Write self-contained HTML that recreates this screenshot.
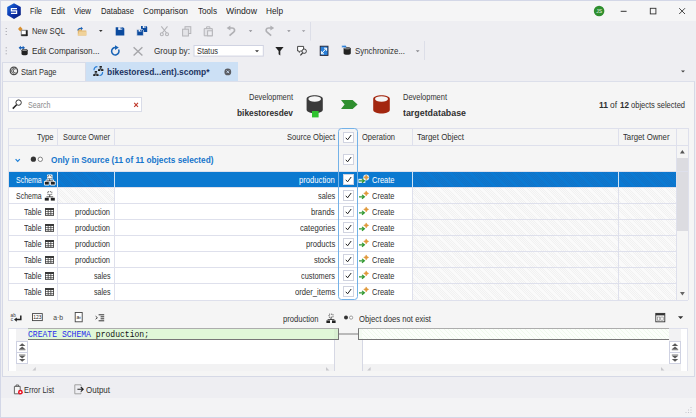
<!DOCTYPE html>
<html><head><meta charset="utf-8"><title>dbForge Schema Compare</title>
<style>
html,body{margin:0;padding:0}
body{width:696px;height:418px;overflow:hidden;position:relative;background:#eeeef2;font-family:"Liberation Sans",sans-serif;color:#303030}
.a{position:absolute}
.t{position:absolute;white-space:nowrap;line-height:12px;font-size:8.6px;height:12px}
svg{position:absolute;overflow:visible}
.hl{position:absolute;height:1px;background:#dee0ec}
.vl{position:absolute;width:1px;background:#dee0ec}
.cb{position:absolute;width:9px;height:9px;background:#fff;border:1px solid #d0d3e0;box-sizing:content-box}
.cb svg{left:1px;top:1px}
.hatch{position:absolute;background:repeating-linear-gradient(45deg,#fafafa 0,#fafafa 1.0px,#f1f1f1 1.0px,#f1f1f1 1.56px)}
.hatchs{position:absolute;background:repeating-linear-gradient(45deg,#0a79d2 0,#0a79d2 1.0px,#1272c6 1.0px,#1272c6 1.56px)}
.mono{font-family:"Liberation Mono",monospace}
</style></head><body>
<!-- window frame -->
<div class="a" style="left:0;top:0;width:696px;height:416px;border:1px solid #d3d7e7;border-right:none"></div>
<div class="a" style="left:1px;top:1px;width:695px;height:20px;background:#f5f5f6"></div>
<!-- tab strip -->
<div class="a" style="left:2px;top:62px;width:84px;height:19px;background:#f3f3f5;border:1px solid #d9dce8;border-bottom:none;box-sizing:border-box"></div>
<div class="a" style="left:86px;top:62px;width:152.3px;height:19.4px;background:#cce0f5"></div>
<!-- document -->
<div class="a" style="left:2px;top:81px;width:693px;height:296px;background:#f5f5f5;border:1px solid #d6d9e6;border-top-color:#dcdfea;box-sizing:border-box"></div>
<!-- bottom status -->
<div class="a" style="left:1px;top:397.5px;width:695px;height:19px;background:#f3f3f5"></div>

<svg style="left:0;top:0" width="696" height="418" viewBox="0 0 696 418">
<defs>
<linearGradient id="lg" x1="0" y1="0" x2="1" y2="1"><stop offset="0" stop-color="#1a6fe0"/><stop offset="0.55" stop-color="#0b2fa8"/><stop offset="1" stop-color="#061a70"/></linearGradient>
</defs>
<!-- app logo -->
<path d="M14 3.2L20.8 7.1V15L14 18.9L7.2 15V7.1Z" fill="url(#lg)"/>
<path d="M17 8.6H11.4V10.9H16.6V13.4H11" fill="none" stroke="#fff" stroke-width="1.2"/>
<!-- title buttons -->
<circle cx="599.1" cy="11" r="5.3" fill="#2f8f2f"/>
<text x="599.1" y="12.8" font-size="5" fill="#e8f5e8" text-anchor="middle" font-family="Liberation Sans, sans-serif">JS</text>
<path d="M620.7 11.3H626.6" stroke="#333" stroke-width="1"/>
<rect x="650.3" y="8.3" width="5.6" height="5.6" fill="none" stroke="#333" stroke-width="0.9"/>
<path d="M679.2 8.2L685 14M685 8.2L679.2 14" stroke="#333" stroke-width="0.9"/>
<!-- grips -->
<g fill="#9a9aa2">
<rect x="5.7" y="28" width="1" height="1"/><rect x="5.7" y="31" width="1" height="1"/><rect x="5.7" y="34" width="1" height="1"/>
<rect x="5.7" y="47.3" width="1" height="1"/><rect x="5.7" y="50.3" width="1" height="1"/><rect x="5.7" y="53.3" width="1" height="1"/>
</g>
<!-- New SQL -->
<path d="M20.3 26.5L22.6 29L20.3 31.5L18 29Z" fill="#d9902f"/>
<path d="M21.3 30.3H27.3V35.8H21.3Z" fill="#fff" stroke="#555" stroke-width="0.7"/>
<path d="M21.3 34.3H27.3V35.9H21.3Z" fill="#222"/><path d="M25.8 30.3H27.5V35.9H25.8Z" fill="#222"/>
<!-- Open folder -->
<path d="M77.8 29.3H81.2L82.2 30.5H86.3V35.4H77.8Z" fill="#e2b66f"/>
<path d="M79.2 31.6H86.3V35.4H77.8Z" fill="#f0d29a"/>
<path d="M77.3 30.6C77.6 28.3 79.6 27.6 81 27.9V26.8L83 28.5L81 30.2V29.1C79.8 28.9 78.6 29.4 78.4 30.6Z" fill="#1b62b8"/>
<path d="M99 30L102.6 30L100.8 32Z" fill="#333"/>
<!-- Save -->
<path d="M115.7 27.2H123L124.3 28.5V35.4H115.7Z" fill="#0b4a9e"/>
<rect x="118.2" y="27.2" width="4" height="2.7" fill="#eef2fa"/><rect x="120.6" y="27.5" width="1.1" height="2" fill="#0b4a9e"/>
<!-- Save all -->
<path d="M141 26H146.3L147.2 26.9V32H141Z" fill="#0b4a9e"/><rect x="142.8" y="26" width="2.8" height="2" fill="#eef2fa"/><rect x="144.4" y="26.2" width="0.9" height="1.5" fill="#0b4a9e"/>
<path d="M136.8 29.4H142.4L143.4 30.4V35.8H136.8Z" fill="#0b4a9e" stroke="#eeeef2" stroke-width="0.7"/><rect x="138.6" y="29.6" width="2.9" height="2" fill="#eef2fa"/><rect x="140.2" y="29.8" width="0.9" height="1.5" fill="#0b4a9e"/>
<!-- Cut -->
<g fill="none" stroke="#b4b4b8" stroke-width="1.1"><path d="M161.3 26.4L166.6 33M167.5 26.4L162.2 33"/><circle cx="161.8" cy="34.3" r="1.5"/><circle cx="167" cy="34.3" r="1.5"/></g>
<!-- Copy -->
<g fill="#e4e4e8" stroke="#b4b4b8" stroke-width="1"><rect x="185" y="26.7" width="5.8" height="6.8"/><rect x="182.6" y="29.2" width="5.8" height="6.8"/></g>
<!-- Paste -->
<g fill="#e4e4e8" stroke="#b4b4b8" stroke-width="1"><path d="M204.2 28.6H212.3V35.8H204.2Z"/><path d="M206.6 28.4V26.8H209.9V28.4" fill="none"/><rect x="207.6" y="30.8" width="4.7" height="5" fill="#eeeef2"/></g>
<!-- Undo / Redo -->
<g fill="none" stroke="#b0b0b4" stroke-width="1.7"><path d="M229.5 35.6L233.6 32.2C235.4 30.6 234.6 28 232.2 28H228.8"/><path d="M271.2 35.6L267.1 32.2C265.3 30.6 266.1 28 268.5 28H271.9"/></g>
<path d="M226.6 28L230.4 25.4V30.6Z" fill="#b0b0b4"/>
<path d="M274.2 28L270.4 25.4V30.6Z" fill="#b0b0b4"/>
<path d="M248.8 30.2H252.4L250.6 32.1Z" fill="#8a8a90"/>
<path d="M287.1 30.2H290.7L288.9 32.1Z" fill="#8a8a90"/>
<path d="M301.8 30.2H305.4L303.6 32.1Z" fill="#9a9aa0"/>
<path d="M310.5 22V40.6" stroke="#dcdee8" stroke-width="1"/>
<!-- Edit comparison -->
<path d="M18.6 47.8L20.9 45.7V47.1H22.7V45.7L25 47.8L22.7 49.9V48.5H20.9V49.9Z" fill="#1b62b8"/>
<path d="M21.5 50.2C21.5 48.6 27.7 48.6 27.7 50.2V53.9C27.7 55.6 21.5 55.6 21.5 53.9Z" fill="#222"/><ellipse cx="24.6" cy="50.2" rx="2.5" ry="0.9" fill="#8a8a8a"/>
<!-- Refresh -->
<path d="M118.6 49.5A3.7 3.7 0 1 1 115.6 47.5" fill="none" stroke="#1762b5" stroke-width="1.5"/><path d="M115 45.3L118.8 47.6L115 49.9Z" fill="#1762b5"/>
<!-- Cancel X -->
<path d="M133.6 47.2L142.4 55.4M142.4 47.2L133.6 55.4" stroke="#a6a6aa" stroke-width="1.4"/>
<!-- Combo -->
<rect x="194" y="45.5" width="69.3" height="10.6" fill="#fff" stroke="#d0d3e2" stroke-width="1"/>
<path d="M255 50.3H259L257 52.3Z" fill="#333"/>
<!-- Filter -->
<path d="M275.3 47H283.6L280.3 51V55.5L278.6 54.2V51Z" fill="#222"/>
<!-- comment search -->
<path d="M297.6 46.4H303.6V51H300.6L299.2 52.4V51H297.6Z" fill="#fff" stroke="#333" stroke-width="0.9"/>
<circle cx="304.2" cy="51.2" r="2.2" fill="#eeeef2" stroke="#333" stroke-width="0.9"/><path d="M302.6 53L300.4 55.3" stroke="#333" stroke-width="1.1"/>
<!-- Image -->
<rect x="320.2" y="46.2" width="7.8" height="9.2" fill="#2a7fd8" stroke="#223" stroke-width="0.9"/>
<path d="M321.6 53.6L326.4 48.2M324 48.2H326.6V50.8M321.4 51.2V53.8H324" fill="none" stroke="#fff" stroke-width="1"/>
<!-- Synchronize -->
<path d="M343.6 48.6C343.6 46.9 350.8 46.9 350.8 48.6V53.2C350.8 55.2 343.6 55.2 343.6 53.2Z" fill="#222"/><ellipse cx="347.2" cy="48.4" rx="2.9" ry="1" fill="#777"/>
<path d="M341.8 45.6H344.8V44.8L346.6 46.6L344.8 48.4V47.6H341.8Z" fill="#2a7fd8" stroke="#eeeef2" stroke-width="0.4"/>
<path d="M415.8 50.3H419.6L417.7 52.3Z" fill="#8a8a90"/>
<path d="M424.5 41V60" stroke="#dcdee8" stroke-width="1"/>
<!-- tab overflow arrow -->
<path d="M681 70.4H685L683 72.5Z" fill="#444"/>
<!-- Start page icon -->
<circle cx="13.9" cy="70.9" r="3.7" fill="#f0f0f0" stroke="#4a4a4a" stroke-width="1.2"/>
<path d="M14 68.5A2.4 2.4 0 1 0 14 73.3M16.6 69A2.2 2.2 0 1 0 16.6 72.8" fill="none" stroke="#555" stroke-width="1"/>
<!-- active tab icon -->
<g fill="#222"><rect x="99.5" y="66" width="2.4" height="1.7"/><path d="M100.3 67.7h0.8v1h1.5v0.8h-3.8v-0.8h1.5z"/><rect x="98" y="69.2" width="2.3" height="1.8"/><rect x="101.1" y="69.2" width="2.3" height="1.8"/><rect x="94.7" y="71" width="2.4" height="1.7"/><path d="M95.5 72.7h0.8v1h1.5v0.8h-3.8v-0.8h1.5z"/><rect x="93.2" y="74.2" width="2.3" height="1.8"/><rect x="96.3" y="74.2" width="2.3" height="1.8"/></g>
<path d="M94 70.2C94 68 95.4 66.8 97.4 66.7" fill="none" stroke="#2a7fd8" stroke-width="1.2"/><path d="M102.6 72C102.6 74.2 101.2 75.4 99.4 75.5" fill="none" stroke="#2a7fd8" stroke-width="1.2"/>
<!-- tab close -->
<circle cx="227.8" cy="71.9" r="3.4" fill="#5a5c62"/><path d="M226.5 70.5L229.1 73.1M229.1 70.5L226.5 73.1" stroke="#cce0f5" stroke-width="0.9"/>
<!-- search box -->
<rect x="8.5" y="97.5" width="133" height="14" fill="#fff" stroke="#d9dce8" stroke-width="1"/>
<circle cx="18.6" cy="102.6" r="2.7" fill="none" stroke="#333" stroke-width="1"/><path d="M16.6 104.8L12.8 108.6" stroke="#222" stroke-width="1.5"/>
<path d="M134.2 102.8L138 106.8M138 102.8L134.2 106.8" stroke="#c0392b" stroke-width="1.1"/>
<!-- source db -->
<path d="M306.6 99C306.6 94 322.8 94 322.8 99V109.6C322.8 114.6 306.6 114.6 306.6 109.6Z" fill="#3a3a3a"/>
<ellipse cx="314.7" cy="99" rx="6.3" ry="2.7" fill="#f5f5f5"/>
<rect x="312" y="111" width="6.6" height="6.4" fill="#2fc22f"/>
<!-- arrow -->
<path d="M341 100H352.6L357.6 104.5L352.6 109H341L344.6 104.5Z" fill="#2f8f2f"/>
<!-- target db -->
<path d="M373.2 99C373.2 94 389.8 94 389.8 99V109.8C389.8 114.8 373.2 114.8 373.2 109.8Z" fill="#a3260f"/>
<ellipse cx="381.5" cy="99" rx="6.5" ry="2.7" fill="#f5f5f5"/>
<!-- group row -->
<path d="M15.6 159.2L17.7 161.4L19.8 159.2" fill="none" stroke="#1e80d8" stroke-width="1.2"/>
<circle cx="33.4" cy="159.2" r="2.6" fill="#333"/><circle cx="40.3" cy="159.3" r="2.2" fill="#fff" stroke="#666" stroke-width="0.8"/>
<!-- lower toolbar -->
<g font-family="Liberation Sans, sans-serif" fill="#333">
<text x="10.6" y="317" font-size="4.6">ab</text><text x="10.8" y="321.4" font-size="4.6">c</text>
<path d="M20.8 315.6V319.6H15.6" fill="none" stroke="#222" stroke-width="1.5"/><path d="M14 319.6L16.8 317.4V321.8Z" fill="#222"/>
<rect x="32.5" y="313.6" width="9.8" height="7" fill="#fff" stroke="#444" stroke-width="0.9"/><text x="37.4" y="319.1" font-size="4.9" text-anchor="middle" fill="#222">123</text>
<text x="58.2" y="320" font-size="6.8" text-anchor="middle" fill="#444">a·b</text>
<rect x="75.2" y="312.5" width="7" height="9.3" fill="#fff" stroke="#444" stroke-width="0.9"/><text x="78.8" y="319.2" font-size="5.2" text-anchor="middle" fill="#222">a‹</text>
<path d="M98.6 314.8H104.2M100.6 316.8H104.2M100.6 318.8H104.2M98.6 320.8H104.2" stroke="#333" stroke-width="1"/><path d="M95.6 316.2L97.4 317.7L95.6 319.2" fill="none" stroke="#333" stroke-width="0.9"/>
</g>
<!-- schema icon lower -->
<g transform="translate(0 -3)"><g fill="#222"><path d="M330.6 320.6h0.8v1.6h3v0.8h-6.8v-0.8h3z"/><rect x="326.4" y="323.4" width="3.6" height="2.6"/><rect x="332" y="323.4" width="3.6" height="2.6"/></g>
<rect x="329" y="317.2" width="4" height="3" fill="none" stroke="#444" stroke-width="0.8" stroke-dasharray="1.2 0.8"/></g>
<circle cx="346" cy="317.6" r="2" fill="#333"/><circle cx="351.1" cy="317.6" r="1.6" fill="#fff" stroke="#777" stroke-width="0.7"/>
<!-- split icon -->
<rect x="655.8" y="313.4" width="9" height="8.4" fill="#fff" stroke="#333" stroke-width="0.9"/><rect x="655.8" y="313.4" width="9" height="2" fill="#333"/><rect x="657.4" y="317" width="2.4" height="3.2" fill="none" stroke="#777" stroke-width="0.6"/><rect x="660.8" y="317" width="2.4" height="3.2" fill="none" stroke="#777" stroke-width="0.6"/>
<path d="M678 316.3H683.2L680.6 319Z" fill="#333"/>
<!-- bottom tabs -->
<path d="M14.4 386.4H20.2V393.8H14.4Z" fill="#f5f5f5" stroke="#555" stroke-width="0.9"/><path d="M16 386.4V385H18.6V386.4" fill="none" stroke="#555" stroke-width="0.9"/>
<circle cx="20.4" cy="392.2" r="2.4" fill="#e81123"/><circle cx="20.4" cy="392.2" r="0.9" fill="#fff"/>
<path d="M81 386V384.8H74.8V393.8H81V392.6" fill="none" stroke="#999" stroke-width="0.9"/>
<path d="M77.4 389.3H83M80.8 387L83.2 389.3L80.8 391.6" fill="none" stroke="#222" stroke-width="1.1"/>
<!-- status grip -->
<g fill="#c4c4cc"><rect x="688" y="412" width="1" height="1"/><rect x="690.5" y="412" width="1" height="1"/><rect x="690.5" y="409.5" width="1" height="1"/><rect x="685.5" y="412" width="1" height="1"/><rect x="688" y="409.5" width="1" height="1"/><rect x="690.5" y="407" width="1" height="1"/></g>
</svg>

<div class="a" style="left:9px;top:172px;width:668px;height:128px;background:#fff"></div>
<div class="a" style="left:677px;top:146px;width:11px;height:154px;background:#f5f5f5"></div>
<div class="a" style="left:676px;top:158px;width:12px;height:73px;background:#dcdce1"></div>
<svg style="left:679.5px;top:150.3px" width="5" height="4"><path d="M0 3.6L2.4 0L4.8 3.6Z" fill="#555"/></svg>
<svg style="left:679.5px;top:292px" width="5" height="4"><path d="M0 0L2.4 3.6L4.8 0Z" fill="#666"/></svg>
<div class="a" style="left:9px;top:172px;width:667px;height:16px;background:#0b79d0"></div>
<div class="hatchs" style="left:58px;top:172px;width:56px;height:16px"></div>
<div class="hatchs" style="left:413px;top:172px;width:263px;height:16px"></div>
<div class="hatch" style="left:58px;top:188px;width:56px;height:16px"></div>
<div class="hatch" style="left:413px;top:188px;width:263px;height:16px"></div>
<div class="hatch" style="left:413px;top:204px;width:263px;height:16px"></div>
<div class="hatch" style="left:413px;top:220px;width:263px;height:16px"></div>
<div class="hatch" style="left:413px;top:236px;width:263px;height:16px"></div>
<div class="hatch" style="left:413px;top:252px;width:263px;height:16px"></div>
<div class="hatch" style="left:413px;top:268px;width:263px;height:16px"></div>
<div class="hatch" style="left:413px;top:284px;width:263px;height:16px"></div>
<div class="hl" style="left:8px;top:128px;width:680px"></div>
<div class="hl" style="left:8px;top:145px;width:680px"></div>
<div class="hl" style="left:8px;top:171px;width:680px"></div>
<div class="hl" style="left:8px;top:187px;width:668px"></div>
<div class="hl" style="left:8px;top:203px;width:668px"></div>
<div class="hl" style="left:8px;top:219px;width:668px"></div>
<div class="hl" style="left:8px;top:235px;width:668px"></div>
<div class="hl" style="left:8px;top:251px;width:668px"></div>
<div class="hl" style="left:8px;top:267px;width:668px"></div>
<div class="hl" style="left:8px;top:283px;width:668px"></div>
<div class="hl" style="left:8px;top:300px;width:680px"></div>
<div class="vl" style="left:8px;top:128px;height:172px"></div>
<div class="vl" style="left:688px;top:128px;height:172px"></div>
<div class="vl" style="left:57px;top:128px;height:18px"></div>
<div class="vl" style="left:57px;top:172px;height:128px"></div>
<div class="vl" style="left:114px;top:128px;height:18px"></div>
<div class="vl" style="left:114px;top:172px;height:128px"></div>
<div class="vl" style="left:412px;top:128px;height:18px"></div>
<div class="vl" style="left:412px;top:172px;height:128px"></div>
<div class="vl" style="left:618px;top:128px;height:18px"></div>
<div class="vl" style="left:618px;top:172px;height:128px"></div>
<div class="vl" style="left:676px;top:128px;height:18px"></div>
<div class="vl" style="left:676px;top:172px;height:128px"></div>
<div class="vl" style="left:676px;top:146px;height:26px"></div>
<div class="vl" style="left:57px;top:172px;height:15px;background:#cfe3f5"></div>
<div class="vl" style="left:114px;top:172px;height:15px;background:#cfe3f5"></div>
<div class="vl" style="left:412px;top:172px;height:15px;background:#cfe3f5"></div>
<div class="vl" style="left:618px;top:172px;height:15px;background:#cfe3f5"></div>
<div class="a" style="left:338.2px;top:128px;width:19.7px;height:172px;border:1.1px solid #74b2e8;border-radius:3.5px;box-sizing:border-box;background:transparent"></div>
<div class="cb" style="left:343px;top:132px"><svg style='left:0;top:0' width="9" height="9" viewBox="0 0 9 9"><path d="M1.8 4.8L3.6 6.8L7.2 2" fill="none" stroke="#222" stroke-width="1"/></svg></div>
<div class="cb" style="left:343px;top:154px"><svg style='left:0;top:0' width="9" height="9" viewBox="0 0 9 9"><path d="M1.8 4.8L3.6 6.8L7.2 2" fill="none" stroke="#222" stroke-width="1"/></svg></div>
<div class="cb" style="left:343px;top:174px"><svg style='left:0;top:0' width="9" height="9" viewBox="0 0 9 9"><path d="M1.8 4.8L3.6 6.8L7.2 2" fill="none" stroke="#222" stroke-width="1"/></svg></div>
<div class="cb" style="left:343px;top:190px"><svg style='left:0;top:0' width="9" height="9" viewBox="0 0 9 9"><path d="M1.8 4.8L3.6 6.8L7.2 2" fill="none" stroke="#222" stroke-width="1"/></svg></div>
<div class="cb" style="left:343px;top:206px"><svg style='left:0;top:0' width="9" height="9" viewBox="0 0 9 9"><path d="M1.8 4.8L3.6 6.8L7.2 2" fill="none" stroke="#222" stroke-width="1"/></svg></div>
<div class="cb" style="left:343px;top:222px"><svg style='left:0;top:0' width="9" height="9" viewBox="0 0 9 9"><path d="M1.8 4.8L3.6 6.8L7.2 2" fill="none" stroke="#222" stroke-width="1"/></svg></div>
<div class="cb" style="left:343px;top:238px"><svg style='left:0;top:0' width="9" height="9" viewBox="0 0 9 9"><path d="M1.8 4.8L3.6 6.8L7.2 2" fill="none" stroke="#222" stroke-width="1"/></svg></div>
<div class="cb" style="left:343px;top:254px"><svg style='left:0;top:0' width="9" height="9" viewBox="0 0 9 9"><path d="M1.8 4.8L3.6 6.8L7.2 2" fill="none" stroke="#222" stroke-width="1"/></svg></div>
<div class="cb" style="left:343px;top:270px"><svg style='left:0;top:0' width="9" height="9" viewBox="0 0 9 9"><path d="M1.8 4.8L3.6 6.8L7.2 2" fill="none" stroke="#222" stroke-width="1"/></svg></div>
<div class="cb" style="left:343px;top:286px"><svg style='left:0;top:0' width="9" height="9" viewBox="0 0 9 9"><path d="M1.8 4.8L3.6 6.8L7.2 2" fill="none" stroke="#222" stroke-width="1"/></svg></div>
<svg style="left:0;top:0" width="696" height="418" viewBox="0 0 696 418">
<g fill="#fff" stroke="#fff" stroke-width="1.6" stroke-linejoin="round"><rect x="47.8" y="175.4" width="4" height="3"/><path d="M49.4 178.4h0.8v2h3v0.8h-6.8v-0.8h3z"/><rect x="44.8" y="181.8" width="4" height="2.8"/><rect x="50.8" y="181.8" width="4" height="2.8"/></g><rect x="47.8" y="175.70000000000002" width="4" height="2.8" fill="#fff" stroke="#444" stroke-width="0.8" stroke-dasharray="1.2 0.8"/><g fill="#222"><path d="M49.4 178.8h0.8v1.6h3v0.8h-6.8v-0.8h3z"/><rect x="44.8" y="181.8" width="4" height="2.8"/><rect x="50.8" y="181.8" width="4" height="2.8"/></g>
<path d="M358.4 178.79999999999998H365.4V183.0H358.4Z" fill="#fff" opacity="0.85"/><circle cx="366.2" cy="177.39999999999998" r="3" fill="#fff" opacity="0.85"/>
<path d="M359 180.79999999999998H364M362 178.89999999999998L364.4 180.79999999999998L362 182.7" fill="none" stroke="#339933" stroke-width="1.2"/>
<path d="M366.2 174.89999999999998L367.1 176.5L368.7 177.39999999999998L367.1 178.29999999999998L366.2 179.89999999999998L365.3 178.29999999999998L363.7 177.39999999999998L365.3 176.5Z" fill="#e0983a" stroke="#e0983a" stroke-width="0.5"/>
<rect x="47.8" y="191.70000000000002" width="4" height="2.8" fill="none" stroke="#444" stroke-width="0.8" stroke-dasharray="1.2 0.8"/><g fill="#222"><path d="M49.4 194.8h0.8v1.6h3v0.8h-6.8v-0.8h3z"/><rect x="44.8" y="197.8" width="4" height="2.8"/><rect x="50.8" y="197.8" width="4" height="2.8"/></g>
<path d="M359 196.79999999999998H364M362 194.89999999999998L364.4 196.79999999999998L362 198.7" fill="none" stroke="#339933" stroke-width="1.2"/>
<path d="M366.2 190.89999999999998L367.1 192.5L368.7 193.39999999999998L367.1 194.29999999999998L366.2 195.89999999999998L365.3 194.29999999999998L363.7 193.39999999999998L365.3 192.5Z" fill="#e0983a" stroke="#e0983a" stroke-width="0.5"/>
<rect x="45" y="208" width="9" height="7.8" fill="#3a3a3a"/><rect x="45.80" y="210.00" width="1.93" height="1.2" fill="#fff"/><rect x="45.80" y="211.80" width="1.93" height="1.2" fill="#fff"/><rect x="45.80" y="213.60" width="1.93" height="1.2" fill="#fff"/><rect x="48.53" y="210.00" width="1.93" height="1.2" fill="#fff"/><rect x="48.53" y="211.80" width="1.93" height="1.2" fill="#fff"/><rect x="48.53" y="213.60" width="1.93" height="1.2" fill="#fff"/><rect x="51.26" y="210.00" width="1.93" height="1.2" fill="#fff"/><rect x="51.26" y="211.80" width="1.93" height="1.2" fill="#fff"/><rect x="51.26" y="213.60" width="1.93" height="1.2" fill="#fff"/>
<path d="M359 212.79999999999998H364M362 210.89999999999998L364.4 212.79999999999998L362 214.7" fill="none" stroke="#339933" stroke-width="1.2"/>
<path d="M366.2 206.89999999999998L367.1 208.5L368.7 209.39999999999998L367.1 210.29999999999998L366.2 211.89999999999998L365.3 210.29999999999998L363.7 209.39999999999998L365.3 208.5Z" fill="#e0983a" stroke="#e0983a" stroke-width="0.5"/>
<rect x="45" y="224" width="9" height="7.8" fill="#3a3a3a"/><rect x="45.80" y="226.00" width="1.93" height="1.2" fill="#fff"/><rect x="45.80" y="227.80" width="1.93" height="1.2" fill="#fff"/><rect x="45.80" y="229.60" width="1.93" height="1.2" fill="#fff"/><rect x="48.53" y="226.00" width="1.93" height="1.2" fill="#fff"/><rect x="48.53" y="227.80" width="1.93" height="1.2" fill="#fff"/><rect x="48.53" y="229.60" width="1.93" height="1.2" fill="#fff"/><rect x="51.26" y="226.00" width="1.93" height="1.2" fill="#fff"/><rect x="51.26" y="227.80" width="1.93" height="1.2" fill="#fff"/><rect x="51.26" y="229.60" width="1.93" height="1.2" fill="#fff"/>
<path d="M359 228.79999999999998H364M362 226.89999999999998L364.4 228.79999999999998L362 230.7" fill="none" stroke="#339933" stroke-width="1.2"/>
<path d="M366.2 222.89999999999998L367.1 224.5L368.7 225.39999999999998L367.1 226.29999999999998L366.2 227.89999999999998L365.3 226.29999999999998L363.7 225.39999999999998L365.3 224.5Z" fill="#e0983a" stroke="#e0983a" stroke-width="0.5"/>
<rect x="45" y="240" width="9" height="7.8" fill="#3a3a3a"/><rect x="45.80" y="242.00" width="1.93" height="1.2" fill="#fff"/><rect x="45.80" y="243.80" width="1.93" height="1.2" fill="#fff"/><rect x="45.80" y="245.60" width="1.93" height="1.2" fill="#fff"/><rect x="48.53" y="242.00" width="1.93" height="1.2" fill="#fff"/><rect x="48.53" y="243.80" width="1.93" height="1.2" fill="#fff"/><rect x="48.53" y="245.60" width="1.93" height="1.2" fill="#fff"/><rect x="51.26" y="242.00" width="1.93" height="1.2" fill="#fff"/><rect x="51.26" y="243.80" width="1.93" height="1.2" fill="#fff"/><rect x="51.26" y="245.60" width="1.93" height="1.2" fill="#fff"/>
<path d="M359 244.79999999999998H364M362 242.89999999999998L364.4 244.79999999999998L362 246.7" fill="none" stroke="#339933" stroke-width="1.2"/>
<path d="M366.2 238.89999999999998L367.1 240.5L368.7 241.39999999999998L367.1 242.29999999999998L366.2 243.89999999999998L365.3 242.29999999999998L363.7 241.39999999999998L365.3 240.5Z" fill="#e0983a" stroke="#e0983a" stroke-width="0.5"/>
<rect x="45" y="256" width="9" height="7.8" fill="#3a3a3a"/><rect x="45.80" y="258.00" width="1.93" height="1.2" fill="#fff"/><rect x="45.80" y="259.80" width="1.93" height="1.2" fill="#fff"/><rect x="45.80" y="261.60" width="1.93" height="1.2" fill="#fff"/><rect x="48.53" y="258.00" width="1.93" height="1.2" fill="#fff"/><rect x="48.53" y="259.80" width="1.93" height="1.2" fill="#fff"/><rect x="48.53" y="261.60" width="1.93" height="1.2" fill="#fff"/><rect x="51.26" y="258.00" width="1.93" height="1.2" fill="#fff"/><rect x="51.26" y="259.80" width="1.93" height="1.2" fill="#fff"/><rect x="51.26" y="261.60" width="1.93" height="1.2" fill="#fff"/>
<path d="M359 260.8H364M362 258.9L364.4 260.8L362 262.7" fill="none" stroke="#339933" stroke-width="1.2"/>
<path d="M366.2 254.89999999999998L367.1 256.5L368.7 257.4L367.1 258.3L366.2 259.9L365.3 258.3L363.7 257.4L365.3 256.5Z" fill="#e0983a" stroke="#e0983a" stroke-width="0.5"/>
<rect x="45" y="272" width="9" height="7.8" fill="#3a3a3a"/><rect x="45.80" y="274.00" width="1.93" height="1.2" fill="#fff"/><rect x="45.80" y="275.80" width="1.93" height="1.2" fill="#fff"/><rect x="45.80" y="277.60" width="1.93" height="1.2" fill="#fff"/><rect x="48.53" y="274.00" width="1.93" height="1.2" fill="#fff"/><rect x="48.53" y="275.80" width="1.93" height="1.2" fill="#fff"/><rect x="48.53" y="277.60" width="1.93" height="1.2" fill="#fff"/><rect x="51.26" y="274.00" width="1.93" height="1.2" fill="#fff"/><rect x="51.26" y="275.80" width="1.93" height="1.2" fill="#fff"/><rect x="51.26" y="277.60" width="1.93" height="1.2" fill="#fff"/>
<path d="M359 276.8H364M362 274.9L364.4 276.8L362 278.7" fill="none" stroke="#339933" stroke-width="1.2"/>
<path d="M366.2 270.9L367.1 272.5L368.7 273.4L367.1 274.3L366.2 275.9L365.3 274.3L363.7 273.4L365.3 272.5Z" fill="#e0983a" stroke="#e0983a" stroke-width="0.5"/>
<rect x="45" y="288" width="9" height="7.8" fill="#3a3a3a"/><rect x="45.80" y="290.00" width="1.93" height="1.2" fill="#fff"/><rect x="45.80" y="291.80" width="1.93" height="1.2" fill="#fff"/><rect x="45.80" y="293.60" width="1.93" height="1.2" fill="#fff"/><rect x="48.53" y="290.00" width="1.93" height="1.2" fill="#fff"/><rect x="48.53" y="291.80" width="1.93" height="1.2" fill="#fff"/><rect x="48.53" y="293.60" width="1.93" height="1.2" fill="#fff"/><rect x="51.26" y="290.00" width="1.93" height="1.2" fill="#fff"/><rect x="51.26" y="291.80" width="1.93" height="1.2" fill="#fff"/><rect x="51.26" y="293.60" width="1.93" height="1.2" fill="#fff"/>
<path d="M359 292.8H364M362 290.9L364.4 292.8L362 294.7" fill="none" stroke="#339933" stroke-width="1.2"/>
<path d="M366.2 286.9L367.1 288.5L368.7 289.4L367.1 290.3L366.2 291.9L365.3 290.3L363.7 289.4L365.3 288.5Z" fill="#e0983a" stroke="#e0983a" stroke-width="0.5"/>
</svg>
<div class="a" style="left:9px;top:329px;width:325px;height:42px;background:#fff"></div>
<div class="a" style="left:16px;top:329px;width:12px;height:42px;background:#f2f2f3"></div>
<div class="a" style="left:28px;top:364px;width:306px;height:7px;background:#f2f2f3"></div>
<div class="hl" style="left:8px;top:328px;width:20px"></div>
<div class="vl" style="left:8px;top:328px;height:43px"></div>
<div class="vl" style="left:334px;top:329px;height:42px;background:#d6d8e4"></div>
<div class="a" style="left:28px;top:328px;width:311px;height:12px;background:#e0f8d8;border-top:1px solid #adadad;border-bottom:1px solid #777;border-right:1px solid #777;box-sizing:border-box"></div>
<div class="a" style="left:334px;top:329px;width:4px;height:10px;background:#d9f0d2"></div>
<div class="a" style="left:339px;top:333px;width:19px;height:2px;background:#b9b9b9"></div>
<div class="a" style="left:362px;top:329px;width:307px;height:42px;background:#fff"></div>
<div class="a" style="left:362px;top:364px;width:307px;height:7px;background:#f2f2f3"></div>
<div class="a" style="left:669px;top:329px;width:12px;height:42px;background:#f2f2f3"></div>
<div class="a" style="left:681px;top:329px;width:6px;height:42px;background:#fff"></div>
<div class="vl" style="left:687px;top:328px;height:43px;background:#e0e2ec"></div>
<div class="vl" style="left:362px;top:329px;height:42px;background:#d6d8e4"></div>
<div class="a" style="left:358px;top:328px;width:311px;height:12px;background:repeating-linear-gradient(45deg,#fbfefa 0,#fbfefa 2.5px,#eff9ec 2.5px,#eff9ec 3.2px);border-top:1px solid #adadad;border-bottom:1px solid #777;border-left:1px solid #777;box-sizing:border-box"></div>
<div class="a" style="left:359px;top:329px;width:3px;height:10px;background:#f4fbf2"></div>
<div class="hl" style="left:669px;top:328px;width:19px"></div>
<div class="a" style="left:16px;top:340.7px;width:11.6px;height:12px;background:#fff;border:1px solid #cfd2e2;box-sizing:border-box"></div>
<div class="a" style="left:16px;top:352.4px;width:11.6px;height:12px;background:#fff;border:1px solid #cfd2e2;box-sizing:border-box"></div>
<div class="a" style="left:669px;top:340.7px;width:11.6px;height:12px;background:#fff;border:1px solid #cfd2e2;box-sizing:border-box"></div>
<div class="a" style="left:669px;top:352.4px;width:11.6px;height:12px;background:#fff;border:1px solid #cfd2e2;box-sizing:border-box"></div>
<svg style="left:0;top:0" width="696" height="418" viewBox="0 0 696 418">
<g fill="#5a5a5a"><path d="M22.2 343.2L25.4 346H19.0Z"/><path d="M22.2 346.4L25.4 349.2H19.0Z"/><rect x="19.0" y="349.4" width="6.4" height="0.8"/><rect x="19.0" y="354.6" width="6.4" height="0.8"/><path d="M22.2 358.6L25.4 355.8H19.0Z"/><path d="M22.2 361.8L25.4 359H19.0Z"/></g>
<g fill="#5a5a5a"><path d="M675 343.2L678.2 346H671.8Z"/><path d="M675 346.4L678.2 349.2H671.8Z"/><rect x="671.8" y="349.4" width="6.4" height="0.8"/><rect x="671.8" y="354.6" width="6.4" height="0.8"/><path d="M675 358.6L678.2 355.8H671.8Z"/><path d="M675 361.8L678.2 359H671.8Z"/></g>
<path d="M32.4 370.4H35.8V367Z" fill="#c8c8cc"/>
<path d="M326 367V370.4H329.4Z" fill="#c8c8cc"/>
<path d="M367.2 370.4H370.59999999999997V367Z" fill="#c8c8cc"/>
<path d="M661 367V370.4H664.4Z" fill="#c8c8cc"/>
</svg>
<span class="t mono" style="left:28px;top:328.9px;font-size:8.8px;transform:scaleX(0.917);transform-origin:0 0;color:#111"><span style="color:#2a2aee">CREATE SCHEMA</span> production;</span>
<span class="t" id="t0" style="font-size:8.6px;color:#1e1e1e;left:29.5px;top:4.800000000000001px;transform:scaleX(0.8658);transform-origin:0 0;">File</span>
<span class="t" id="t1" style="font-size:8.6px;color:#1e1e1e;left:51px;top:4.800000000000001px;transform:scaleX(0.9451);transform-origin:0 0;">Edit</span>
<span class="t" id="t2" style="font-size:8.6px;color:#1e1e1e;left:74px;top:4.800000000000001px;transform:scaleX(0.9197);transform-origin:0 0;">View</span>
<span class="t" id="t3" style="font-size:8.6px;color:#1e1e1e;left:100.5px;top:4.800000000000001px;transform:scaleX(0.8968);transform-origin:0 0;">Database</span>
<span class="t" id="t4" style="font-size:8.6px;color:#1e1e1e;left:143px;top:4.800000000000001px;transform:scaleX(0.9710);transform-origin:0 0;">Comparison</span>
<span class="t" id="t5" style="font-size:8.6px;color:#1e1e1e;left:197.5px;top:4.800000000000001px;transform:scaleX(0.9470);transform-origin:0 0;">Tools</span>
<span class="t" id="t6" style="font-size:8.6px;color:#1e1e1e;left:225.5px;top:4.800000000000001px;transform:scaleX(1.0138);transform-origin:0 0;">Window</span>
<span class="t" id="t7" style="font-size:8.6px;color:#1e1e1e;left:265.5px;top:4.800000000000001px;transform:scaleX(0.9611);transform-origin:0 0;">Help</span>
<span class="t" id="t8" style="font-size:8.6px;left:31.5px;top:25.4px;transform:scaleX(0.8972);transform-origin:0 0;">New SQL</span>
<span class="t" id="t9" style="font-size:8.6px;left:31.5px;top:44.9px;transform:scaleX(0.9547);transform-origin:0 0;">Edit Comparison...</span>
<span class="t" id="t10" style="font-size:8.6px;left:154px;top:44.9px;transform:scaleX(0.9536);transform-origin:0 0;">Group by:</span>
<span class="t" id="t11" style="font-size:8.6px;left:197px;top:44.9px;transform:scaleX(0.8615);transform-origin:0 0;">Status</span>
<span class="t" id="t12" style="font-size:8.6px;left:355px;top:44.9px;transform:scaleX(0.9180);transform-origin:0 0;">Synchronize...</span>
<span class="t" id="t13" style="font-size:8.6px;left:21px;top:66.4px;transform:scaleX(0.8742);transform-origin:0 0;">Start Page</span>
<span class="t" id="t14" style="font-size:8.6px;color:#1d3461;font-weight:bold;left:106.5px;top:66.4px;transform:scaleX(0.9800);transform-origin:0 0;">bikestoresd...ent).scomp*</span>
<span class="t" id="t15" style="font-size:8.6px;color:#8a8a8a;left:27.5px;top:98.9px;transform:scaleX(0.8262);transform-origin:0 0;">Search</span>
<span class="t" id="t16" style="font-size:8.6px;color:#333;left:249px;top:91.4px;transform:scaleX(0.8689);transform-origin:0 0;">Development</span>
<span class="t" id="t17" style="font-size:8.6px;font-weight:bold;left:237px;top:107.4px;transform:scaleX(0.9686);transform-origin:0 0;">bikestoresdev</span>
<span class="t" id="t18" style="font-size:8.6px;color:#333;left:403px;top:91.4px;transform:scaleX(0.8689);transform-origin:0 0;">Development</span>
<span class="t" id="t19" style="font-size:8.6px;font-weight:bold;left:403px;top:107.4px;transform:scaleX(1.0304);transform-origin:0 0;">targetdatabase</span>
<span class="t" id="t20" style="font-size:8.6px;font-weight:bold;left:598.5px;top:99.4px;transform:scaleX(0.9897);transform-origin:0 0;">11</span>
<span class="t" id="t21" style="font-size:8.6px;left:610px;top:99.4px;transform:scaleX(0.9760);transform-origin:0 0;">of</span>
<span class="t" id="t22" style="font-size:8.6px;font-weight:bold;left:619.5px;top:99.4px;transform:scaleX(0.9412);transform-origin:0 0;">12</span>
<span class="t" id="t23" style="font-size:8.6px;left:631px;top:99.4px;transform:scaleX(0.8763);transform-origin:0 0;">objects selected</span>
<span class="t" id="t24" style="font-size:8.6px;left:36.5px;top:131.4px;transform:scaleX(0.8852);transform-origin:0 0;">Type</span>
<span class="t" id="t25" style="font-size:8.6px;left:63px;top:131.4px;transform:scaleX(0.8555);transform-origin:0 0;">Source Owner</span>
<span class="t" id="t26" style="font-size:8.6px;left:287px;top:131.4px;transform:scaleX(0.8812);transform-origin:0 0;">Source Object</span>
<span class="t" id="t27" style="font-size:8.6px;left:361.5px;top:131.4px;transform:scaleX(0.8742);transform-origin:0 0;">Operation</span>
<span class="t" id="t28" style="font-size:8.6px;left:417px;top:131.4px;transform:scaleX(0.9196);transform-origin:0 0;">Target Object</span>
<span class="t" id="t29" style="font-size:8.6px;left:622.5px;top:131.4px;transform:scaleX(0.9013);transform-origin:0 0;">Target Owner</span>
<span class="t" id="t30" style="font-size:8.6px;color:#1575cc;font-weight:bold;left:50.5px;top:153.8px;transform:scaleX(0.9611);transform-origin:0 0;">Only in Source (11 of 11 objects selected)</span>
<span class="t" id="t31" style="font-size:8.6px;color:#fff;left:16.2px;top:174.4px;transform:scaleX(0.8119);transform-origin:0 0;">Schema</span>
<span class="t" id="t32" style="font-size:8.6px;color:#fff;left:299.2px;top:174.4px;transform:scaleX(0.8919);transform-origin:0 0;">production</span>
<span class="t" id="t33" style="font-size:8.6px;color:#fff;left:372px;top:174.4px;transform:scaleX(0.8722);transform-origin:0 0;">Create</span>
<span class="t" id="t34" style="font-size:8.6px;left:16.2px;top:190.4px;transform:scaleX(0.8119);transform-origin:0 0;">Schema</span>
<span class="t" id="t35" style="font-size:8.6px;left:317.7px;top:190.4px;transform:scaleX(0.8623);transform-origin:0 0;">sales</span>
<span class="t" id="t36" style="font-size:8.6px;left:372px;top:190.4px;transform:scaleX(0.8722);transform-origin:0 0;">Create</span>
<span class="t" id="t37" style="font-size:8.6px;left:24.3px;top:206.4px;transform:scaleX(0.8517);transform-origin:0 0;">Table</span>
<span class="t" id="t38" style="font-size:8.6px;left:75px;top:206.4px;transform:scaleX(0.8719);transform-origin:0 0;">production</span>
<span class="t" id="t39" style="font-size:8.6px;left:311.4px;top:206.4px;transform:scaleX(0.8980);transform-origin:0 0;">brands</span>
<span class="t" id="t40" style="font-size:8.6px;left:372px;top:206.4px;transform:scaleX(0.8722);transform-origin:0 0;">Create</span>
<span class="t" id="t41" style="font-size:8.6px;left:24.3px;top:222.4px;transform:scaleX(0.8517);transform-origin:0 0;">Table</span>
<span class="t" id="t42" style="font-size:8.6px;left:75px;top:222.4px;transform:scaleX(0.8719);transform-origin:0 0;">production</span>
<span class="t" id="t43" style="font-size:8.6px;left:299.7px;top:222.4px;transform:scaleX(0.8901);transform-origin:0 0;">categories</span>
<span class="t" id="t44" style="font-size:8.6px;left:372px;top:222.4px;transform:scaleX(0.8722);transform-origin:0 0;">Create</span>
<span class="t" id="t45" style="font-size:8.6px;left:24.3px;top:238.4px;transform:scaleX(0.8517);transform-origin:0 0;">Table</span>
<span class="t" id="t46" style="font-size:8.6px;left:75px;top:238.4px;transform:scaleX(0.8719);transform-origin:0 0;">production</span>
<span class="t" id="t47" style="font-size:8.6px;left:305.7px;top:238.4px;transform:scaleX(0.8887);transform-origin:0 0;">products</span>
<span class="t" id="t48" style="font-size:8.6px;left:372px;top:238.4px;transform:scaleX(0.8722);transform-origin:0 0;">Create</span>
<span class="t" id="t49" style="font-size:8.6px;left:24.3px;top:254.4px;transform:scaleX(0.8517);transform-origin:0 0;">Table</span>
<span class="t" id="t50" style="font-size:8.6px;left:75px;top:254.4px;transform:scaleX(0.8719);transform-origin:0 0;">production</span>
<span class="t" id="t51" style="font-size:8.6px;left:313.6px;top:254.4px;transform:scaleX(0.8785);transform-origin:0 0;">stocks</span>
<span class="t" id="t52" style="font-size:8.6px;left:372px;top:254.4px;transform:scaleX(0.8722);transform-origin:0 0;">Create</span>
<span class="t" id="t53" style="font-size:8.6px;left:24.3px;top:270.4px;transform:scaleX(0.8517);transform-origin:0 0;">Table</span>
<span class="t" id="t54" style="font-size:8.6px;left:93.5px;top:270.4px;transform:scaleX(0.8224);transform-origin:0 0;">sales</span>
<span class="t" id="t55" style="font-size:8.6px;left:301px;top:270.4px;transform:scaleX(0.8577);transform-origin:0 0;">customers</span>
<span class="t" id="t56" style="font-size:8.6px;left:372px;top:270.4px;transform:scaleX(0.8722);transform-origin:0 0;">Create</span>
<span class="t" id="t57" style="font-size:8.6px;left:24.3px;top:286.4px;transform:scaleX(0.8517);transform-origin:0 0;">Table</span>
<span class="t" id="t58" style="font-size:8.6px;left:93.5px;top:286.4px;transform:scaleX(0.8224);transform-origin:0 0;">sales</span>
<span class="t" id="t59" style="font-size:8.6px;left:294.7px;top:286.4px;transform:scaleX(0.8882);transform-origin:0 0;">order_items</span>
<span class="t" id="t60" style="font-size:8.6px;left:372px;top:286.4px;transform:scaleX(0.8722);transform-origin:0 0;">Create</span>
<span class="t" id="t61" style="font-size:8.6px;left:283px;top:312.9px;transform:scaleX(0.8844);transform-origin:0 0;">production</span>
<span class="t" id="t62" style="font-size:8.6px;left:359px;top:312.9px;transform:scaleX(0.8970);transform-origin:0 0;">Object does not exist</span>
<span class="t" id="t63" style="font-size:8.6px;left:24px;top:383.9px;transform:scaleX(0.8606);transform-origin:0 0;">Error List</span>
<span class="t" id="t64" style="font-size:8.6px;left:86px;top:383.9px;transform:scaleX(0.9298);transform-origin:0 0;">Output</span>
</body></html>
